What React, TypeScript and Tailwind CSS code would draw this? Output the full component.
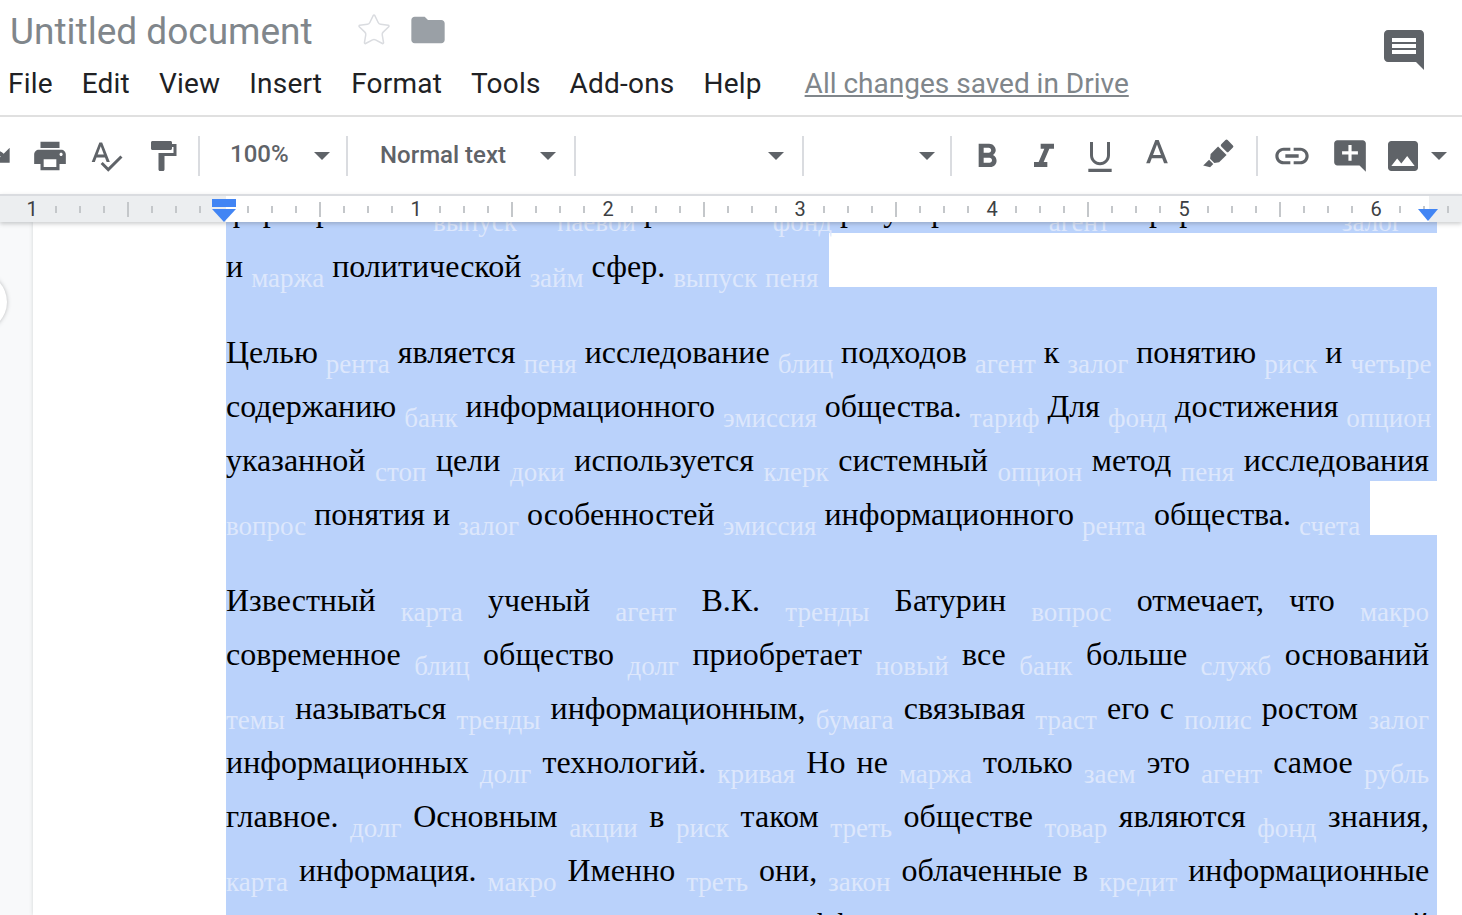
import { Star } from "lucide-react";

const paragraphs: { text: string; short?: string; lead?: string }[][] = [
  [
    {
      text: "формирование ~выпуск \u00a0 \u00a0 ~паевой развития ~фонд регулирования ~агент переработчика \u00a0 ~залог",
      short: "w-[1211px]",
      lead: "leading-[62px]",
    },
    { text: "и ~маржа политической ~займ сфер. ~выпуск ~пеня", short: "w-[603px]" },
  ],
  [
    { text: "Целью ~рента является ~пеня исследование ~блиц подходов ~агент к ~залог понятию ~риск и ~четыре" },
    { text: "содержанию ~банк информационного ~эмиссия общества. ~тариф Для ~фонд достижения ~опцион" },
    { text: "указанной ~стоп цели ~доки используется ~клерк системный ~опцион метод ~пеня исследования" },
    { text: "~вопрос понятия и ~залог особенностей ~эмиссия информационного ~рента общества. ~счета", short: "w-[1144px]" },
  ],
  [
    { text: "Известный ~карта ученый ~агент В.К. ~тренды Батурин ~вопрос отмечает, что ~макро" },
    { text: "современное ~блиц общество ~долг приобретает ~новый все ~банк больше ~служб оснований" },
    { text: "~темы называться ~тренды информационным, ~бумага связывая ~траст его с ~полис ростом ~залог" },
    { text: "информационных ~долг технологий. ~кривая Но не ~маржа только ~заем это ~агент самое ~рубль" },
    { text: "главное. ~долг Основным ~акции в ~риск таком ~треть обществе ~товар являются ~фонд знания," },
    { text: "~карта информация. ~макро Именно ~треть они, ~закон облаченные в ~кредит информационные" },
    { text: "~кредит технологии, ~рента составляющие эффективное ~риск развитие ~лот современной" },
  ],
];

const menus = ["File", "Edit", "View", "Insert", "Format", "Tools", "Add-ons", "Help"];

function Icon({ d, size = "w-10 h-10", className = "" }: { d: string; size?: string; className?: string }) {
  return (
    <svg viewBox="0 0 24 24" className={`${size} ${className} fill-[#5f6368] shrink-0`}>
      <path d={d} />
    </svg>
  );
}

function ToolButton({ d, size, className }: { d: string; size?: string; className?: string }) {
  return (
    <div className="w-[56.5px] h-10 flex items-center justify-center shrink-0">
      <Icon d={d} size={size} className={className} />
    </div>
  );
}

function Caret() {
  return <div className="w-0 h-0 shrink-0 border-x-[8px] border-x-transparent border-t-[8px] border-t-[#5f6368]" />;
}

function Divider() {
  return <div className="w-[2px] h-10 bg-[#dadce0] shrink-0" />;
}

function Line({ text, short, lead }: { text: string; short?: string; lead?: string }) {
  const words = text.split(" ");
  return (
    <div className={`h-[54px] bg-[#bad2fb] ${short ?? "w-[1211px] pr-2"}`}>
      <p className={`h-[54px] whitespace-nowrap ${lead ?? "leading-[66px]"} ${short ? "" : "[text-align-last:justify]"}`}>
        {words.map((w, i) => (
          <span key={i}>
            {w.startsWith("~") ? (
              <span className="text-[27px] text-[#dde7fc] align-[-10px]">{w.slice(1)}</span>
            ) : (
              w
            )}
            {i < words.length - 1 ? " " : ""}
          </span>
        ))}
      </p>
    </div>
  );
}

function Ruler() {
  const cells = Array.from({ length: 60 }, (_, i) => i);
  return (
    <div className="relative z-10 h-[28px] shrink-0 border-t-2 border-[#dadce0] shadow-[0_2px_4px_rgba(60,64,67,0.25)] bg-[linear-gradient(90deg,#eceef0_226px,#ffffff_226px,#ffffff_1429px,#eceef0_1429px)] overflow-hidden">
      <div className="flex h-full pl-5 items-center">
        {cells.map((i) => {
          const label = i === 0 ? 1 : i >= 16 && i % 8 === 0 ? i / 8 - 1 : null;
          return (
            <div key={i} className="w-6 h-full shrink-0 flex items-center justify-center">
              {label !== null ? (
                <span className="text-[20px] leading-none text-[#3c4043]">{label}</span>
              ) : i === 8 ? null : i % 4 === 0 ? (
                <div className="w-[2px] h-[15px] bg-[#c4c7ca]" />
              ) : (
                <div className="w-[2px] h-[7px] bg-[#c4c7ca]" />
              )}
            </div>
          );
        })}
      </div>
      {/* indent markers */}
      <div className="absolute left-[212px] top-[3px] w-6 h-[8px] bg-[#4285f4]" />
      <div className="absolute left-[212px] top-[13px] w-0 h-0 border-x-[12px] border-x-transparent border-t-[13px] border-t-[#4285f4]" />
      <div className="absolute left-[1418px] top-[13px] w-0 h-0 border-x-[10px] border-x-transparent border-t-[12px] border-t-[#4285f4]" />
    </div>
  );
}

export default function App() {
  return (
    <div className="h-screen w-full overflow-hidden flex flex-col bg-white font-['Roboto',sans-serif]">
      {/* Header */}
      <header className="h-[117px] shrink-0 border-b-2 border-[#e0e0e0] flex justify-between">
        <div className="flex flex-col">
          <div className="h-[62px] flex items-center pl-[10px]">
            <span className="text-[37px] leading-none text-[#80868b] w-[346px]">Untitled document</span>
            <Star className="w-[36px] h-[36px] text-[#dadce0] -mt-[2px]" strokeWidth={1} />
            <Icon
              size="w-10 h-10"
              className="fill-[#9aa0a6] ml-[16px] -mt-[2px]"
              d="M10 4H4c-1.1 0-1.99.9-1.99 2L2 18c0 1.1.9 2 2 2h16c1.1 0 2-.9 2-2V8c0-1.1-.9-2-2-2h-8l-2-2z"
            />
          </div>
          <div className="flex items-center pl-2 h-[44px] text-[28px] tracking-[0.2px] text-[#202124] gap-[29px]">
            {menus.map((m) => (
              <span key={m}>{m}</span>
            ))}
            <span className="ml-[14px] tracking-normal text-[#80868b] underline">All changes saved in Drive</span>
          </div>
        </div>
        <div className="pt-[26px] pr-[34px]">
          <Icon
            size="w-12 h-12"
            d="M21.99 4c0-1.1-.89-2-1.99-2H4c-1.1 0-2 .9-2 2v12c0 1.1.9 2 2 2h14l4 4-.01-18zM18 14H6v-2h12v2zm0-3H6V9h12v2zm0-3H6V6h12v2z"
          />
        </div>
      </header>

      {/* Toolbar */}
      <div className="h-[77px] shrink-0 flex items-center overflow-hidden">
        <div className="flex items-center -ml-[35px]">
          <ToolButton d="M18.4 10.6C16.55 8.99 14.15 8 11.5 8c-4.65 0-8.58 3.03-9.96 7.22L3.9 16c1.05-3.19 4.05-5.5 7.6-5.5 1.95 0 3.73.72 5.12 1.88L13 16h9V7l-3.6 3.6z" />
          <ToolButton
            size="w-[38px] h-[38px]"
            d="M19 8H5c-1.66 0-3 1.34-3 3v6h4v4h12v-4h4v-6c0-1.66-1.34-3-3-3zm-3 11H8v-5h8v5zm3-7c-.55 0-1-.45-1-1s.45-1 1-1 1 .45 1 1-.45 1-1 1zm-1-9H6v4h12V3z"
          />
          <ToolButton
            size="w-9 h-9"
            d="M12.45 16h2.09L9.43 3H7.57L2.46 16h2.09l1.12-3h5.64l1.14 3zm-6.02-5L8.5 5.48 10.57 11H6.43zm15.16.59l-8.09 8.09L9.83 16l-1.41 1.41 5.09 5.09L23 13l-1.41-1.41z"
          />
          <ToolButton
            size="w-9 h-9"
            d="M18 4V3c0-.55-.45-1-1-1H5c-.55 0-1 .45-1 1v4c0 .55.45 1 1 1h12c.55 0 1-.45 1-1V6h1v4H9v11c0 .55.45 1 1 1h2c.55 0 1-.45 1-1v-9h8V4h-3z"
          />
        </div>
        <div className="ml-[7px]" />
        <Divider />
        <div className="w-[146px] flex items-center justify-between pl-[30px] pr-[16px] shrink-0">
          <span className="text-[24px] font-medium text-[#5f6368] leading-none -mt-[3px]">100%</span>
          <Caret />
        </div>
        <Divider />
        <div className="w-[226px] flex items-center justify-between pl-[32px] pr-[18px] shrink-0">
          <span className="text-[24px] font-medium text-[#5f6368] leading-none -mt-[2px]">Normal text</span>
          <Caret />
        </div>
        <Divider />
        <div className="w-[226px] flex items-center justify-end pr-[18px] shrink-0">
          <Caret />
        </div>
        <Divider />
        <div className="w-[146px] flex items-center justify-end pr-[15px] shrink-0">
          <Caret />
        </div>
        <Divider />
        <div className="ml-[7px] flex items-center">
          <ToolButton
            className="mt-[3px]"
            d="M15.6 10.79c.97-.67 1.65-1.77 1.65-2.79 0-2.26-1.75-4-4-4H7v14h7.04c2.09 0 3.71-1.7 3.71-3.79 0-1.52-.86-2.82-2.15-3.42zM10 6.5h3c.83 0 1.5.67 1.5 1.5s-.67 1.5-1.5 1.5h-3v-3zm3.5 9H10v-3h3.5c.83 0 1.5.67 1.5 1.5s-.67 1.5-1.5 1.5z"
          />
          <ToolButton className="mt-[3px]" d="M10 4v3h2.21l-3.42 8H6v3h8v-3h-2.21l3.42-8H18V4z" />
          <ToolButton
            className="mt-[2px]"
            d="M12 17c3.31 0 6-2.69 6-6V3h-1.8v8c0 2.3-1.9 4.2-4.2 4.2S7.8 13.3 7.8 11V3H6v8c0 3.31 2.69 6 6 6zm-7 2v2h14v-2H5z"
          />
          <ToolButton className="-mt-[2px]" d="M11 3L5.5 17h2.25l1.12-3h6.25l1.12 3h2.25L13 3h-2zm-1.38 9L12 5.67 14.38 12H9.62z" />
          <div className="w-[56.5px] h-10 flex items-center justify-center shrink-0 pl-[8px]">
            <svg viewBox="0 0 24 24" className="w-9 h-9 fill-[#5f6368]">
              <g transform="rotate(45 12 12)">
                <rect x="8.5" y="-0.5" width="7" height="6" rx="1" />
                <path d="M8 7h8v7l-2 2.5h-4L8 14z" />
                <path d="M10 17.5h4v3l-4 2.5z" />
              </g>
            </svg>
          </div>
        </div>
        <div className="ml-[14px]" />
        <Divider />
        <div className="ml-[6px] flex items-center">
          <ToolButton
            className="mt-[1px]"
            d="M3.9 12c0-1.71 1.39-3.1 3.1-3.1h4V7H7c-2.76 0-5 2.24-5 5s2.24 5 5 5h4v-1.9H7c-1.71 0-3.1-1.39-3.1-3.1zM8 13h8v-2H8v2zm9-6h-4v1.9h4c1.71 0 3.1 1.39 3.1 3.1s-1.39 3.1-3.1 3.1h-4V17h4c2.76 0 5-2.24 5-5s-2.24-5-5-5z"
          />
          <ToolButton
            size="w-[38px] h-[38px]"
            className="mt-[1px] ml-[3px]"
            d="M22 4c0-1.1-.9-2-2-2H4c-1.1 0-2 .9-2 2v12c0 1.1.9 2 2 2h14l4 4V4zm-5 7h-4v4h-2v-4H7V9h4V5h2v4h4v2z"
          />
          <div className="w-[52px] h-10 flex justify-center shrink-0">
            <Icon d="M21 19V5c0-1.1-.9-2-2-2H5c-1.1 0-2 .9-2 2v14c0 1.1.9 2 2 2h14c1.1 0 2-.9 2-2zM8.5 13.5l2.5 3.01L14.5 12l4.5 6H5l3.5-4.5z" />
          </div>
          <div className="ml-[2px]">
            <Caret />
          </div>
        </div>
      </div>

      <Ruler />

      {/* Document */}
      <div className="relative flex-1 min-h-0 flex overflow-hidden bg-[#f8f9fa]">
        <div className="absolute -left-[51px] top-[51px] w-[58px] h-[58px] rounded-full bg-white shadow-[0_0_4px_rgba(60,64,67,0.35)]" />
        <div className="w-[33px] shrink-0" />
        <main className="flex-1 bg-white pl-[193px] shadow-[0_0_4px_rgba(60,64,67,0.2)] font-['Liberation_Serif',serif] text-[32px] text-black">
          <div className="-mt-[43px]">
            {paragraphs.map((lines, p) => (
              <div key={p}>
                {p > 0 && <div className="w-[1211px] h-8 bg-[#bad2fb]" />}
                {lines.map((line, l) => (
                  <Line key={l} text={line.text} short={line.short} lead={line.lead} />
                ))}
              </div>
            ))}
          </div>
        </main>
      </div>
    </div>
  );
}
